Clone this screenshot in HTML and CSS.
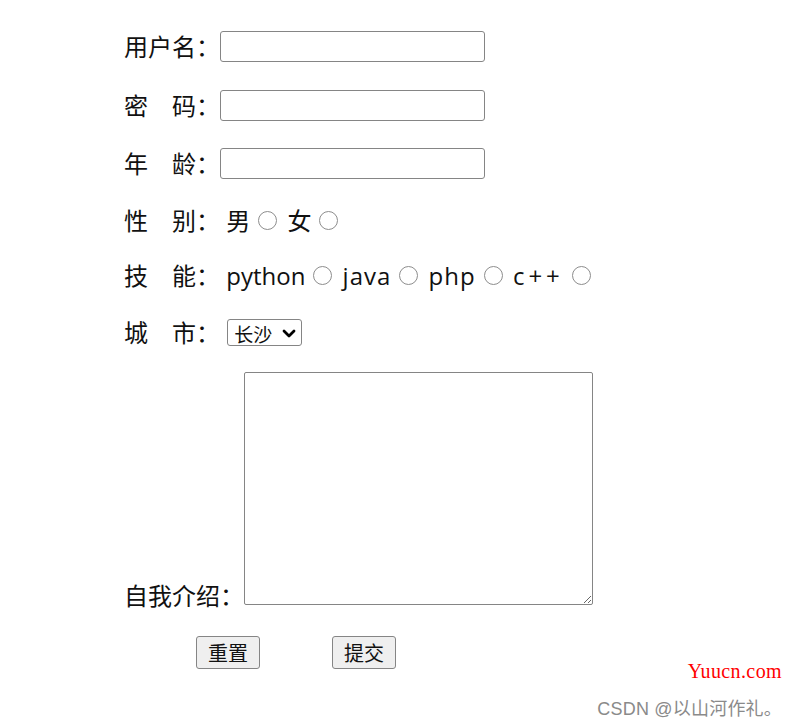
FILE: index.html
```html
<!DOCTYPE html>
<html lang="zh-CN">
<head>
    <meta charset="UTF-8">
    <meta name="viewport" content="width=device-width, initial-scale=1.0">
    <title>表单</title>
    <link rel="stylesheet" href="styles.css">
</head>
<body>
    <form class="form">
        <div class="row"><label class="label">用户名：</label><input class="field" type="text"></div>
        <div class="row row-2"><label class="label">密　码：</label><input class="field" type="password"></div>
        <div class="row row-3"><label class="label">年　龄：</label><input class="field" type="text"></div>
        <div class="row row-4"><span class="label">性　别：</span> 男<input class="radio" type="radio" name="sex"> 女<input class="radio" type="radio" name="sex"></div>
        <div class="row row-5"><span class="label">技　能：</span> python<input class="radio" type="radio" name="skill"> <span class="wide">java</span><input class="radio" type="radio" name="skill"> <span class="wide">php</span><input class="radio" type="radio" name="skill"> <span class="plus">c++</span><input class="radio" type="radio" name="skill"></div>
        <div class="row row-6"><label class="label">城　市：</label> <span class="select-wrap">
                <select class="city">
                    <option>长沙</option>
                    <option>北京</option>
                    <option>上海</option>
                </select>
                <svg class="chevron" width="14" height="9" viewBox="0 0 14 9"><path d="M2 2l5 5 5-5" fill="none" stroke="#000" stroke-width="2.8" stroke-linecap="round" stroke-linejoin="round"/></svg>
            </span></div>
        <div class="row-intro"><label class="label">自我介绍：</label><textarea class="intro"></textarea></div>
        <div class="actions">
            <button type="reset" class="btn">重置</button>
            <button type="submit" class="btn">提交</button>
        </div>
    </form>

    <div class="mark">Yuucn.com</div>
    <div class="credit">CSDN @以山河作礼。</div>
</body>
</html>
```

FILE: styles.css
```css
body {
    margin: 0;
    background: #fff;
    color: #111;
    font-family: "Open Sans", "Noto Sans CJK SC", sans-serif;
}
.form {
    padding: 31px 0 0 124px;
    font-size: 24px;
    line-height: 31px;
}
.row {
    height: 31px;
    white-space: nowrap;
}
.row-2 { margin-top: 28px; }
.row-3 { margin-top: 27px; }
.row-4 { margin-top: 26px; }
.row-5 { margin-top: 24px; }
.row-6 { margin-top: 26px; }
.field {
    box-sizing: border-box;
    width: 265px;
    height: 31px;
    margin: 0;
    padding: 2px 4px;
    border: 1px solid #858585;
    border-radius: 3px;
    vertical-align: top;
    font-size: 20px;
}
.radio {
    appearance: none;
    box-sizing: border-box;
    width: 19px;
    height: 19px;
    margin: 0 4px 0 8px;
    border: 1.5px solid #8d8d8d;
    border-radius: 50%;
    background: #fff;
    vertical-align: 0;
}
.wide {
    letter-spacing: 1px;
}
.plus {
    letter-spacing: 4px;
}
.select-wrap {
    position: relative;
    display: inline-block;
    vertical-align: top;
    margin-left: 1px;
    height: 31px;
}
.city {
    appearance: none;
    box-sizing: border-box;
    width: 75px;
    height: 27px;
    margin: 2px 0 0;
    padding: 0 0 0 6px;
    border: 1px solid #858585;
    border-radius: 3px;
    background: #fff;
    color: #111;
    font-family: "Noto Sans CJK SC", sans-serif;
    font-size: 19px;
    vertical-align: top;
}
.chevron {
    position: absolute;
    left: 55px;
    top: 12px;
    pointer-events: none;
}
.row-intro {
    margin-top: 24px;
    white-space: nowrap;
}
.intro {
    box-sizing: border-box;
    width: 349px;
    height: 233px;
    margin: 0;
    border: 1px solid #858585;
    border-radius: 2px;
    vertical-align: baseline;
}
.actions {
    margin-top: 25px;
    height: 33px;
    padding-left: 72px;
    display: flex;
    gap: 72px;
}
.btn {
    box-sizing: border-box;
    width: 64px;
    height: 33px;
    padding: 0;
    border: 1px solid #858585;
    border-radius: 3px;
    background: #efefef;
    color: #111;
    font-family: "Noto Sans CJK SC", sans-serif;
    font-size: 20px;
}
.mark {
    position: absolute;
    top: 660px;
    right: 12px;
    color: #f00;
    font-family: "Liberation Serif", serif;
    font-size: 20px;
    letter-spacing: 0.4px;
}
.credit {
    position: absolute;
    top: 694px;
    right: 12px;
    color: #8a8a8a;
    font-family: "Liberation Sans", "Noto Sans CJK SC", sans-serif;
    font-size: 18px;
    letter-spacing: 0.2px;
    text-shadow: 0 0 1px #fff;
}
```
